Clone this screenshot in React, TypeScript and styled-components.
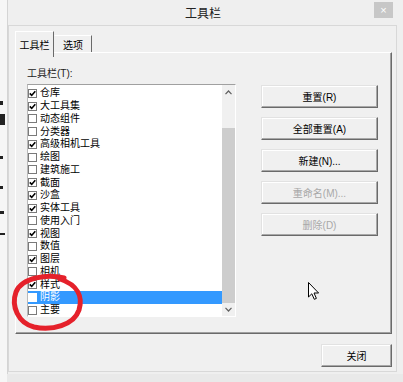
import React from "react";
import styled, { createGlobalStyle } from "styled-components";

const GlobalStyle = createGlobalStyle`
  html, body {
    margin: 0;
    padding: 0;
    background: #e9e9e9;
  }
  body {
    font-family: "Liberation Sans", "Noto Sans CJK SC", sans-serif;
    font-size: 10px;
    color: #000;
  }
`;

const Screen = styled.div`
  position: relative;
  width: 403px;
  height: 382px;
  display: flex;
  overflow: hidden;
  background: #e9e9e9;
`;

const BehindStrip = styled.div`
  width: 7px;
  height: 100%;
  background: #f6f6f6;
  display: flex;
  flex-direction: column;
  flex-shrink: 0;
`;

const Mark = styled.div<{ $top: number; $w: number; $h: number }>`
  margin-top: ${(p) => p.$top}px;
  width: ${(p) => p.$w}px;
  height: ${(p) => p.$h}px;
  background: #222;
`;

const Window = styled.div`
  width: 396px;
  height: 374px;
  box-sizing: border-box;
  display: flex;
  flex-direction: column;
  background: #efefef;
  border-left: 1px solid #d4d4d4;
`;

const TitleBar = styled.div`
  height: 25px;
  flex-shrink: 0;
  display: grid;
  grid-template-columns: 1fr auto 1fr;
  align-items: center;
  padding-right: 5px;
`;

const Title = styled.div`
  grid-column: 2;
  font-size: 12px;
  color: #222;
`;

const CloseX = styled.div`
  grid-column: 3;
  justify-self: end;
  align-self: start;
  margin: 2px 5px 0 0;
  width: 19px;
  height: 16px;
  background: #c7c7c7;
  color: #fff;
  font-size: 11px;
  line-height: 16px;
  text-align: center;
`;

const Client = styled.div`
  flex: 1;
  margin: 0 6px 2px 0;
  border: 1px solid #d8d8d8;
  padding: 5px 4px 4px 6px;
  background: #f0f0f0;
  display: flex;
  flex-direction: column;
`;

const TabRow = styled.div`
  height: 21px;
  display: flex;
  align-items: flex-end;
`;

const Tab = styled.div<{ $active?: boolean }>`
  position: relative;
  z-index: 1;
  box-sizing: border-box;
  height: ${(p) => (p.$active ? 26 : 17)}px;
  margin-bottom: ${(p) => (p.$active ? -5 : 0)}px;
  width: ${(p) => (p.$active ? 39 : 38)}px;
  background: #f0f0f0;
  border-top: 1px solid #fff;
  border-left: 1px solid ${(p) => (p.$active ? "#fff" : "transparent")};
  border-right: 1px solid #6a6a6a;
  display: flex;
  align-items: center;
  justify-content: center;
  padding-bottom: ${(p) => (p.$active ? 1 : 0)}px;
  font-size: 10px;
`;

const Panel = styled.div`
  height: 282px;
  box-sizing: border-box;
  border-top: 1px solid #fff;
  border-left: 1px solid #fff;
  border-right: 1px solid #6a6a6a;
  border-bottom: 1px solid #6a6a6a;
  box-shadow: inset -1px -1px 0 #a0a0a0;
  display: grid;
  grid-template-columns: 209px 117px;
  column-gap: 25px;
  align-items: start;
  padding: 15px 0 0 11px;
`;

const ListColumn = styled.div`
  display: flex;
  flex-direction: column;
`;

const Label = styled.div`
  height: 12px;
  line-height: 12px;
  margin-bottom: 4px;
  color: #222;
`;

const ListBox = styled.div`
  height: 233px;
  box-sizing: border-box;
  background: #fff;
  border-top: 1px solid #a0a0a0;
  border-left: 1px solid #b9b9b9;
  border-right: 1px solid #fff;
  border-bottom: 1px solid #fff;
  display: flex;
`;

const Items = styled.div`
  flex: 1;
  overflow: hidden;
  padding-top: 2px;
`;

const Row = styled.div<{ $selected?: boolean }>`
  height: 12.75px;
  display: flex;
  align-items: center;
  gap: 3px;
  background: ${(p) => (p.$selected ? "#3399ff" : "transparent")};
  color: ${(p) => (p.$selected ? "#fff" : "#000")};
  white-space: nowrap;
  font-size: 10px;
  line-height: 12px;
`;

const Box = styled.span<{ $selected?: boolean }>`
  width: 9px;
  height: 9px;
  box-sizing: border-box;
  flex-shrink: 0;
  border: 1px solid ${(p) => (p.$selected ? "#fff" : "#7a7a7a")};
  background: #fff;
  display: flex;
  align-items: center;
  justify-content: center;
`;

const ScrollBar = styled.div`
  width: 13px;
  flex-shrink: 0;
  background: #f0f0f0;
  display: flex;
  flex-direction: column;
`;

const ArrowButton = styled.div<{ $h: number }>`
  height: ${(p) => p.$h}px;
  display: flex;
  align-items: center;
  justify-content: center;
`;

const Track = styled.div`
  flex: 1;
`;

const Thumb = styled.div<{ $offset: number; $size: number }>`
  margin-top: ${(p) => p.$offset}px;
  height: ${(p) => p.$size}px;
  background: #cdcdcd;
`;

const ButtonColumn = styled.div`
  display: flex;
  flex-direction: column;
  gap: 9px;
  padding-top: 17px;
`;

const Button = styled.div<{ $disabled?: boolean; $w?: number }>`
  width: ${(p) => p.$w ?? 117}px;
  height: 23px;
  box-sizing: border-box;
  background: #f0f0f0;
  border: 1px solid;
  border-color: #e2e2e2 #6a6a6a #6a6a6a #e2e2e2;
  box-shadow: inset -1px -1px 0 #a8a8a8, inset 1px 1px 0 #fff;
  display: flex;
  align-items: center;
  justify-content: center;
  font-size: 10px;
  color: ${(p) => (p.$disabled ? "#a8a8a8" : "#000")};
`;

const Footer = styled.div`
  margin-top: 10px;
  display: flex;
  justify-content: flex-end;
`;

const Overlay = styled.svg`
  position: absolute;
  left: 0;
  top: 0;
  pointer-events: none;
`;

const items: { name: string; on: boolean }[] = [
  { name: "仓库", on: true },
  { name: "大工具集", on: true },
  { name: "动态组件", on: false },
  { name: "分类器", on: false },
  { name: "高级相机工具", on: true },
  { name: "绘图", on: false },
  { name: "建筑施工", on: false },
  { name: "截面", on: true },
  { name: "沙盒", on: true },
  { name: "实体工具", on: true },
  { name: "使用入门", on: false },
  { name: "视图", on: true },
  { name: "数值", on: false },
  { name: "图层", on: true },
  { name: "相机", on: false },
  { name: "样式", on: true },
  { name: "阴影", on: false },
  { name: "主要", on: false },
];

const marks = [
  { top: 101, w: 3, h: 4 },
  { top: 9, w: 5, h: 11 },
  { top: 31, w: 3, h: 3 },
  { top: 27, w: 3, h: 3 },
  { top: 22, w: 4, h: 3 },
  { top: 19, w: 5, h: 2 },
];

function Check() {
  return (
    <svg width="7" height="7" viewBox="0 0 7 7">
      <path d="M0.8 3.4 L2.7 5.4 L6.3 1.2" fill="none" stroke="#000" strokeWidth="1.6" />
    </svg>
  );
}

function Chevron({ up }: { up?: boolean }) {
  return (
    <svg width="7" height="5" viewBox="0 0 7 5">
      <path
        d={up ? "M0.5 4.2 L3.5 1 L6.5 4.2" : "M0.5 0.8 L3.5 4 L6.5 0.8"}
        fill="none"
        stroke="#606060"
        strokeWidth="1.2"
      />
    </svg>
  );
}

export default function App() {
  return (
    <>
      <GlobalStyle />
      <Screen>
        <BehindStrip>
          {marks.map((m, i) => (
            <Mark key={i} $top={m.top} $w={m.w} $h={m.h} />
          ))}
        </BehindStrip>
        <Window>
          <TitleBar>
            <Title>工具栏</Title>
            <CloseX>×</CloseX>
          </TitleBar>
          <Client>
            <TabRow>
              <Tab $active>工具栏</Tab>
              <Tab>选项</Tab>
            </TabRow>
            <Panel>
              <ListColumn>
                <Label>工具栏(T):</Label>
                <ListBox>
                  <Items>
                    {items.map((it) => {
                      const sel = it.name === "阴影";
                      return (
                        <Row key={it.name} $selected={sel}>
                          <Box $selected={sel}>{it.on && <Check />}</Box>
                          {it.name}
                        </Row>
                      );
                    })}
                  </Items>
                  <ScrollBar>
                    <ArrowButton $h={14}>
                      <Chevron up />
                    </ArrowButton>
                    <Track>
                      <Thumb $offset={29} $size={175} />
                    </Track>
                    <ArrowButton $h={13}>
                      <Chevron />
                    </ArrowButton>
                  </ScrollBar>
                </ListBox>
              </ListColumn>
              <ButtonColumn>
                <Button>重置(R)</Button>
                <Button>全部重置(A)</Button>
                <Button>新建(N)...</Button>
                <Button $disabled>重命名(M)...</Button>
                <Button $disabled>删除(D)</Button>
              </ButtonColumn>
            </Panel>
            <Footer>
              <Button $w={71}>关闭</Button>
            </Footer>
          </Client>
        </Window>
        <Overlay width="403" height="382" viewBox="0 0 403 382">
          <path
            d="M64 278 C48 274, 22 277, 16 292 C11 306, 18 323, 34 327 C52 331, 74 325, 79 310 C83 297, 78 285, 60 279"
            fill="none"
            stroke="#e5212b"
            strokeWidth="5"
            strokeLinecap="round"
          />
          <path
            d="M308.5 282.5 L308.5 297 L311.8 293.8 L314.3 299.3 L316.4 298.4 L314 293 L318.6 293 Z"
            fill="#fff"
            stroke="#000"
            strokeWidth="1"
            strokeLinejoin="round"
          />
        </Overlay>
      </Screen>
    </>
  );
}
